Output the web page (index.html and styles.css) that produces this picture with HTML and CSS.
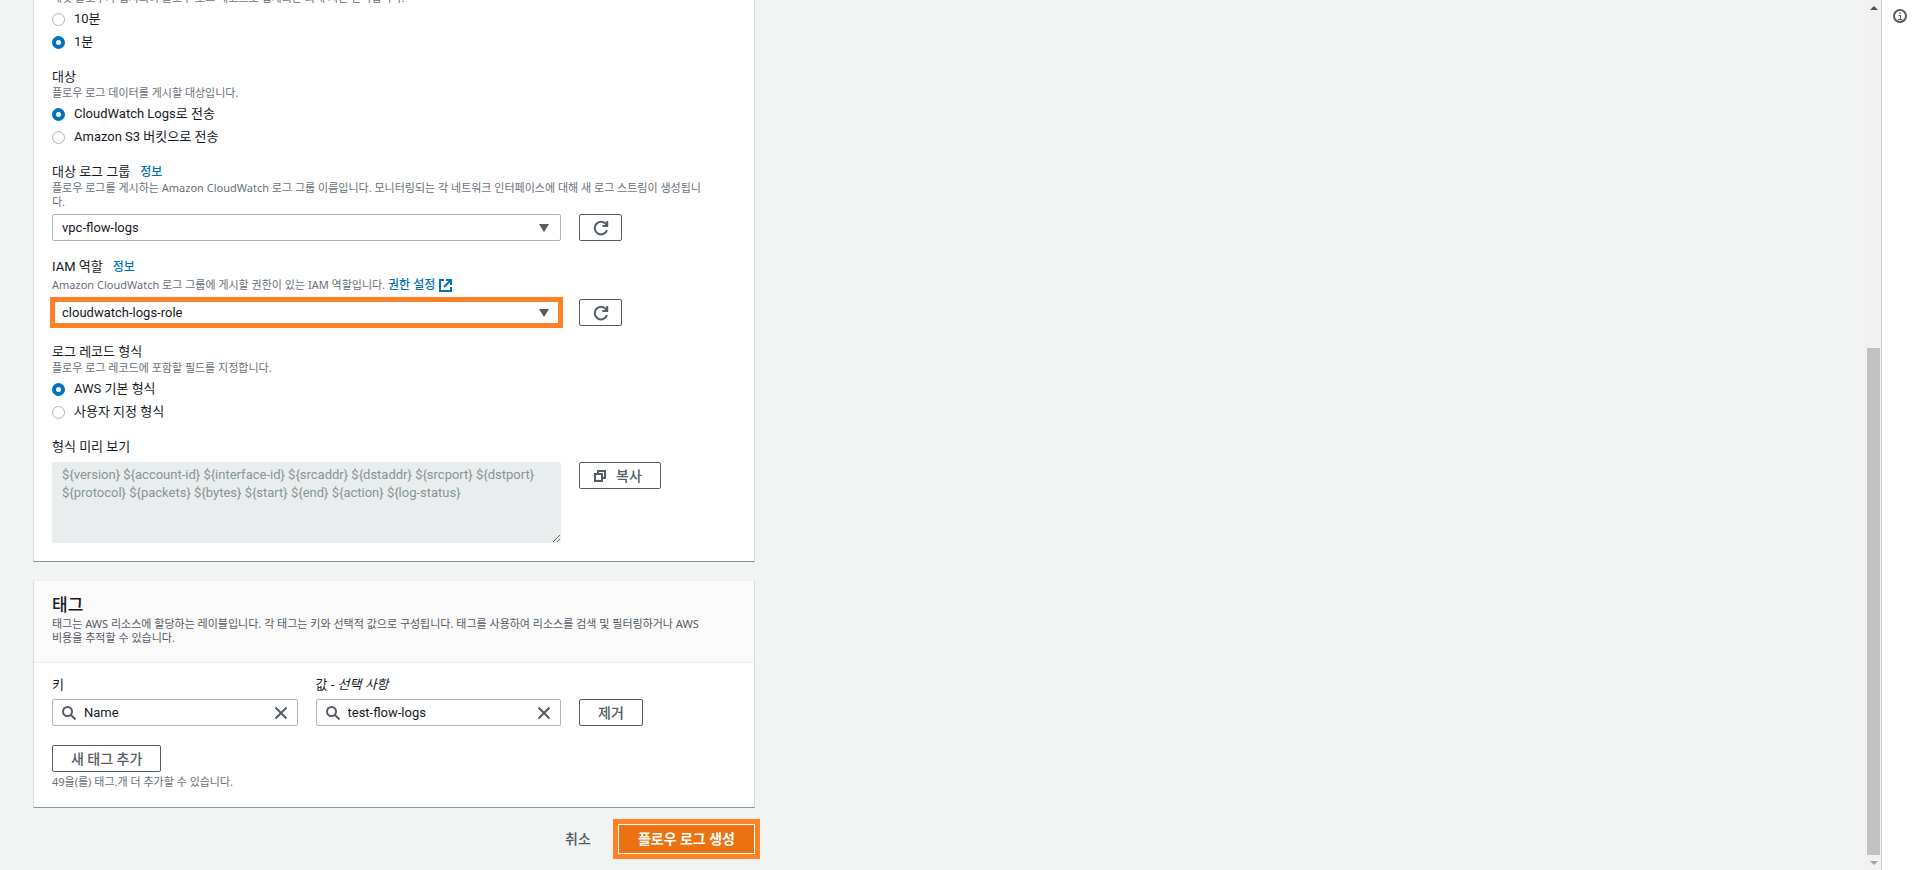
FILE: index.html
```html
<!DOCTYPE html>
<html lang="ko">
<head>
    <meta charset="UTF-8">
    <meta name="viewport" content="width=device-width, initial-scale=1.0">
    <title>플로우 로그 생성</title>
    <link rel="stylesheet" href="styles.css">
</head>
<body>
    <div class="layout">
        <main class="content">
            <form class="form">
                <section class="card card-settings">
                    <fieldset class="field field-interval">
                        <p class="hint">패킷 플로우가 캡처되어 플로우 로그 레코드로 집계되는 최대 시간 간격입니다.</p>
                        <label class="radio"><input type="radio" name="interval"> 10분</label>
                        <label class="radio"><input type="radio" name="interval" checked> 1분</label>
                    </fieldset>

                    <fieldset class="field">
                        <legend class="label">대상</legend>
                        <p class="hint">플로우 로그 데이터를 게시할 대상입니다.</p>
                        <label class="radio"><input type="radio" name="destination" checked> CloudWatch Logs로 전송</label>
                        <label class="radio"><input type="radio" name="destination"> Amazon S3 버킷으로 전송</label>
                    </fieldset>

                    <div class="field">
                        <div class="label"><label for="log-group">대상 로그 그룹</label> <a class="info" href="#">정보</a></div>
                        <p class="hint">플로우 로그를 게시하는 Amazon CloudWatch 로그 그룹 이름입니다. 모니터링되는 각 네트워크 인터페이스에 대해 새 로그 스트림이 생성됩니<br>다.</p>
                        <div class="row">
                            <div class="select">
                                <select id="log-group"><option>vpc-flow-logs</option></select>
                                <svg class="caret" viewBox="0 0 10 8"><path d="M0 0h10L5 8z"/></svg>
                            </div>
                            <button class="btn btn-icon" type="button" aria-label="새로 고침">
                                <svg class="icon" viewBox="0 0 16 16"><path d="M14 10.2A6.3 6.3 0 1 1 13 4.2L14 5.5"/><path d="M14.2 1v5H9.4"/></svg>
                            </button>
                        </div>
                    </div>

                    <div class="field">
                        <div class="label"><label for="iam-role">IAM 역할</label> <a class="info" href="#">정보</a></div>
                        <p class="hint hint-link">Amazon CloudWatch 로그 그룹에 게시할 권한이 있는 IAM 역할입니다.
                            <a href="#">권한 설정<svg class="icon icon-external" viewBox="0 0 13 13"><path d="M5 1H1v11h11V8"/><path d="M7 1h5v5M12 1L5 8"/></svg></a></p>
                        <div class="row">
                            <div class="select select-marked">
                                <select id="iam-role"><option>cloudwatch-logs-role</option></select>
                                <svg class="caret" viewBox="0 0 10 8"><path d="M0 0h10L5 8z"/></svg>
                            </div>
                            <button class="btn btn-icon" type="button" aria-label="새로 고침">
                                <svg class="icon" viewBox="0 0 16 16"><path d="M14 10.2A6.3 6.3 0 1 1 13 4.2L14 5.5"/><path d="M14.2 1v5H9.4"/></svg>
                            </button>
                        </div>
                    </div>

                    <fieldset class="field">
                        <legend class="label">로그 레코드 형식</legend>
                        <p class="hint">플로우 로그 레코드에 포함할 필드를 지정합니다.</p>
                        <label class="radio"><input type="radio" name="format" checked> AWS 기본 형식</label>
                        <label class="radio"><input type="radio" name="format"> 사용자 지정 형식</label>
                    </fieldset>

                    <div class="field field-preview">
                        <div class="label"><label for="preview">형식 미리 보기</label></div>
                        <div class="row">
                            <textarea id="preview" class="preview" disabled>${version} ${account-id} ${interface-id} ${srcaddr} ${dstaddr} ${srcport} ${dstport} ${protocol} ${packets} ${bytes} ${start} ${end} ${action} ${log-status}</textarea>
                            <button class="btn btn-copy" type="button">
                                <svg class="icon icon-copy" viewBox="0 0 14 14"><path d="M2 5h7v7H2z"/><path d="M5 5V2h7v7H9"/></svg>
                                복사
                            </button>
                        </div>
                    </div>
                </section>

                <section class="card card-tags">
                    <header class="card-header">
                        <h2>태그</h2>
                        <p class="hint">태그는 AWS 리소스에 할당하는 레이블입니다. 각 태그는 키와 선택적 값으로 구성됩니다. 태그를 사용하여 리소스를 검색 및 필터링하거나 AWS<br>비용을 추적할 수 있습니다.</p>
                    </header>
                    <div class="card-body">
                        <div class="row">
                            <div class="tag-pair">
                                <div>
                                    <div class="label"><label for="tag-key">키</label></div>
                                    <div class="search">
                                        <svg class="icon" viewBox="0 0 16 16"><circle cx="6.500" cy="6.500" r="4.500"/><path d="M10 10l4.500 4.500"/></svg>
                                        <input id="tag-key" type="text" value="Name">
                                        <button type="button" aria-label="키 지우기"><svg class="icon" viewBox="0 0 16 16"><path d="M2.500 2.500l11 11M13.500 2.500l-11 11"/></svg></button>
                                    </div>
                                </div>
                                <div>
                                    <div class="label"><label for="tag-value">값 - <i>선택 사항</i></label></div>
                                    <div class="search">
                                        <svg class="icon" viewBox="0 0 16 16"><circle cx="6.500" cy="6.500" r="4.500"/><path d="M10 10l4.500 4.500"/></svg>
                                        <input id="tag-value" type="text" value="test-flow-logs">
                                        <button type="button" aria-label="값 지우기"><svg class="icon" viewBox="0 0 16 16"><path d="M2.500 2.500l11 11M13.500 2.500l-11 11"/></svg></button>
                                    </div>
                                </div>
                            </div>
                            <button class="btn btn-remove" type="button">제거</button>
                        </div>
                        <button class="btn btn-add" type="button">새 태그 추가</button>
                        <p class="hint">49을(를) 태그.개 더 추가할 수 있습니다.</p>
                    </div>
                </section>

                <div class="actions">
                    <a class="cancel" href="#">취소</a>
                    <button class="submit" type="submit">플로우 로그 생성</button>
                </div>
            </form>
        </main>

        <div class="scrollbar">
            <svg class="arrow" viewBox="0 0 8 4"><path d="M0 4L4 0l4 4z"/></svg>
            <div class="thumb"></div>
            <svg class="arrow arrow-down" viewBox="0 0 8 4"><path d="M0 0h8L4 4z"/></svg>
        </div>

        <aside class="help">
            <button type="button" aria-label="정보">
                <svg class="icon" viewBox="0 0 16 16"><circle cx="8" cy="8" r="6"/><path class="letter" d="M6.500 7.500h2V11M6 11.500h4.500M7 5h2"/></svg>
            </button>
        </aside>
    </div>
</body>
</html>
```
FILE: styles.css
```css
* {
    box-sizing: border-box;
}
body {
    margin: 0;
    background-color: #f2f3f3;
    color: #16191f;
    font-family: Roboto, "Noto Sans CJK KR", sans-serif;
    font-size: 13px;
    line-height: 18px;
}
input, select, textarea, button {
    font: inherit;
    color: inherit;
}
a {
    color: #0073bb;
    text-decoration: none;
}
.layout {
    display: flex;
    height: 100vh;
    overflow: hidden;
}
.content {
    flex: 1;
    min-width: 0;
    overflow: hidden;
    padding-left: 33px;
}
.form {
    max-width: 727px;
}
.card {
    max-width: 722px;
    background-color: #fff;
    border: 1px solid #d5dbdb;
    border-top-color: #eaeded;
    border-bottom-color: #879596;
}
.card-settings {
    border-top: 0;
    padding: 0 18px 18px;
}
.field {
    border: 0;
    margin: 0 0 18px;
    padding: 0;
    min-width: 0;
}
/* the description above is scrolled partly out of view */
.field-interval {
    margin-top: -10px;
}
.field-preview {
    margin-bottom: 0;
}
.label {
    display: flex;
    align-items: center;
    height: 16px;
    padding: 0;
    line-height: 16px;
}
.info {
    margin-left: 10px;
    font-size: 12px;
    font-weight: 500;
}
.hint {
    margin: 1px 0 0;
    color: #687078;
    font-family: "Noto Sans", "Noto Sans CJK KR", sans-serif;
    font-size: 11px;
    line-height: 14px;
}
.hint-link {
    line-height: 18px;
}
.hint a {
    font-size: 12px;
    font-weight: 500;
    line-height: 14px;
}
.radio {
    display: flex;
    align-items: center;
    gap: 9px;
    height: 18px;
    margin-top: 5px;
}
.radio input {
    appearance: none;
    width: 13px;
    height: 13px;
    margin: 0;
    border: 1px solid #aab7b8;
    border-radius: 50%;
    background-color: #fff;
}
.radio input:checked {
    border: 4px solid #0073bb;
}
.row {
    display: grid;
    grid-template-columns: minmax(0, 1fr) 157px;
    gap: 18px;
    align-items: start;
    justify-items: start;
    margin-top: 5px;
}
.field-preview .row {
    margin-top: 7px;
}
.select {
    position: relative;
    width: 100%;
}
.select select {
    display: block;
    width: 100%;
    height: 27px;
    padding: 0 9px;
    appearance: none;
    border: 1px solid #aab7b8;
    border-radius: 2px;
    background-color: #fff;
}
.select-marked {
    outline: 5px solid #ff8126;
    outline-offset: -3px;
}
.caret {
    position: absolute;
    right: 12px;
    top: 10px;
    width: 10px;
    height: 8px;
    fill: #545b64;
}
.icon {
    width: 16px;
    height: 16px;
    fill: none;
    stroke: #545b64;
    stroke-width: 2;
}
.icon-external {
    width: 13px;
    height: 13px;
    margin-left: 4px;
    stroke: #0073bb;
    vertical-align: -3px;
}
.icon-copy {
    width: 14px;
    height: 14px;
}
.btn {
    display: inline-flex;
    align-items: center;
    justify-content: center;
    height: 27px;
    padding: 0 18px;
    border: 1px solid #545b64;
    border-radius: 2px;
    background-color: #fff;
    color: #545b64;
    font-size: 14px;
    font-weight: 500;
    white-space: nowrap;
}
.btn-icon {
    width: 43px;
    padding: 0;
}
.btn-copy {
    gap: 9px;
    padding: 0 18px 0 13px;
}
.preview {
    display: block;
    width: 100%;
    height: 81px;
    padding: 4px 10px;
    border: 0;
    border-radius: 2px;
    background-color: #eaeded;
    color: #879596;
    resize: vertical;
}
.card-tags {
    margin-top: 18px;
}
.card-header {
    padding: 13px 18px 17px;
    background-color: #fafafa;
    border-bottom: 1px solid #eaeded;
}
.card-header h2 {
    margin: 0;
    font-size: 17px;
    font-weight: 500;
    line-height: 22px;
}
.card-header .hint {
    color: #545b64;
}
.card-body {
    padding: 14px 18px 18px;
}
.card-body .row {
    align-items: end;
    margin-top: 0;
}
.tag-pair {
    display: grid;
    grid-template-columns: 1fr 1fr;
    gap: 18px;
    width: 100%;
}
.search {
    display: flex;
    align-items: center;
    height: 27px;
    margin-top: 6px;
    padding: 0 8px;
    border: 1px solid #aab7b8;
    border-radius: 2px;
}
.search input {
    flex: 1;
    min-width: 0;
    padding: 0 0 0 7px;
    border: 0;
    background: none;
}
.search button {
    display: flex;
    padding: 0;
    border: 0;
    background: none;
}
.search .icon {
    flex: none;
}
.btn-add {
    margin-top: 19px;
}
.card-body .hint {
    margin-top: 3px;
}
.actions {
    display: flex;
    justify-content: flex-end;
    align-items: center;
    gap: 22px;
    margin-top: 11px;
}
.cancel {
    color: #545b64;
    font-size: 14px;
    font-weight: 500;
}
.submit {
    height: 40px;
    padding: 0 20px;
    border: 5px solid #ff8126;
    background-color: #ec7211;
    box-shadow: inset 0 0 0 1px #fff;
    color: #fff;
    font-size: 14px;
    font-weight: 700;
}
.scrollbar {
    display: flex;
    flex-direction: column;
    align-items: center;
    width: 16px;
    padding: 6px 1px 5px 2px;
    background-color: #f1f1f1;
}
.arrow {
    width: 8px;
    height: 4px;
    fill: #505050;
}
.arrow-down {
    margin-top: 6px;
    fill: #a3a3a3;
}
.thumb {
    width: 100%;
    height: 59%;
    margin-top: auto;
    background-color: #c1c1c1;
}
.help {
    width: 32px;
    border-left: 1px solid #ccc;
    background-color: #fff;
}
.help button {
    display: flex;
    margin: 8px 10px;
    padding: 0;
    border: 0;
    background: none;
}
.help .letter {
    stroke-width: 1;
}
```
